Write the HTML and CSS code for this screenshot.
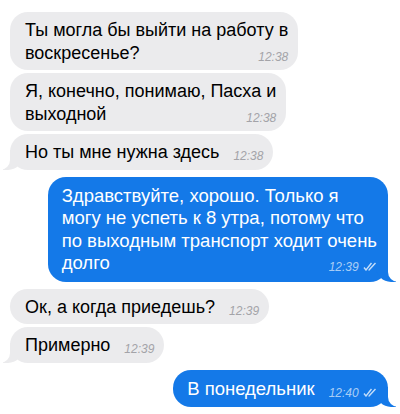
FILE: index.html
```html
<!DOCTYPE html>
<html lang="ru">
<head>
  <meta charset="UTF-8">
  <meta name="viewport" content="width=device-width, initial-scale=1.0">
  <title>Чат</title>
  <link rel="stylesheet" href="styles.css">
</head>
<body>
  <div class="chat">
    <div class="msg in">
      Ты могла бы выйти на работу в<br>воскресенье?<span class="time">12:38</span>
    </div>
    <div class="msg in">
      Я, конечно, понимаю, Пасха и<br>выходной<span class="time">12:38</span>
    </div>
    <div class="msg in tail">
      Но ты мне нужна здесь<span class="time">12:38</span>
    </div>

    <div class="msg out tail group">
      Здравствуйте, хорошо. Только я<br>могу не успеть к 8 утра, потому что<br>по выходным транспорт ходит очень<br>долго<span class="time">12:39 <svg class="ticks" viewBox="0 0 14 9"><path d="M1 5.5 L3 8 L8.5 1 M5.5 8 L6 8 L12.5 1"/></svg></span>
    </div>

    <div class="msg in group">
      Ок, а когда приедешь?<span class="time">12:39</span>
    </div>
    <div class="msg in tail">
      Примерно<span class="time">12:39</span>
    </div>

    <div class="msg out tail group">
      В понедельник<span class="time">12:40 <svg class="ticks" viewBox="0 0 14 9"><path d="M1 5.5 L3 8 L8.5 1 M5.5 8 L6 8 L12.5 1"/></svg></span>
    </div>
  </div>
</body>
</html>
```

FILE: styles.css
```css
body {
  margin: 0;
  background: #fff;
  font-family: "Liberation Sans", Arial, sans-serif;
}
.chat {
  display: flex;
  flex-direction: column;
  align-items: flex-start;
  gap: 3px;
  padding: 12px 12px 0 10px;
}
.msg {
  position: relative;
  z-index: 0;
  max-width: 345px;
  padding: 7px 10px 6px 15px;
  border-radius: 18px;
  background: #ebebed;
  color: #000;
  font-size: 18px;
  line-height: 22.5px;
}
.msg.out {
  align-self: flex-end;
  padding: 8px 11px 7px 14px;
  background: #1479e8;
  color: #fff;
  font-size: 18.5px;
}
.group {
  margin-top: 4px;
}
.time {
  float: right;
  margin: 9px 0 0 14px;
  font-size: 12px;
  line-height: 12px;
  font-style: italic;
  color: #a3a3a8;
}
.out .time {
  color: rgba(255, 255, 255, 0.65);
}
.ticks {
  width: 14px;
  height: 9px;
  margin-left: 1px;
  fill: none;
  stroke: rgba(255, 255, 255, 0.75);
  stroke-width: 1.4;
}

/* bubble tails */
.tail::before,
.tail::after {
  content: "";
  position: absolute;
  bottom: 0;
  height: 20px;
  z-index: -1;
}
.in.tail::before {
  left: -7px;
  width: 20px;
  background: #ebebed;
  border-bottom-right-radius: 15px;
}
.in.tail::after {
  left: -26px;
  width: 26px;
  background: #fff;
  border-bottom-right-radius: 10px;
}
.out.tail::before {
  right: -8px;
  width: 20px;
  background: #1479e8;
  border-bottom-left-radius: 15px;
}
.out.tail::after {
  right: -26px;
  width: 26px;
  background: #fff;
  border-bottom-left-radius: 10px;
}
```
